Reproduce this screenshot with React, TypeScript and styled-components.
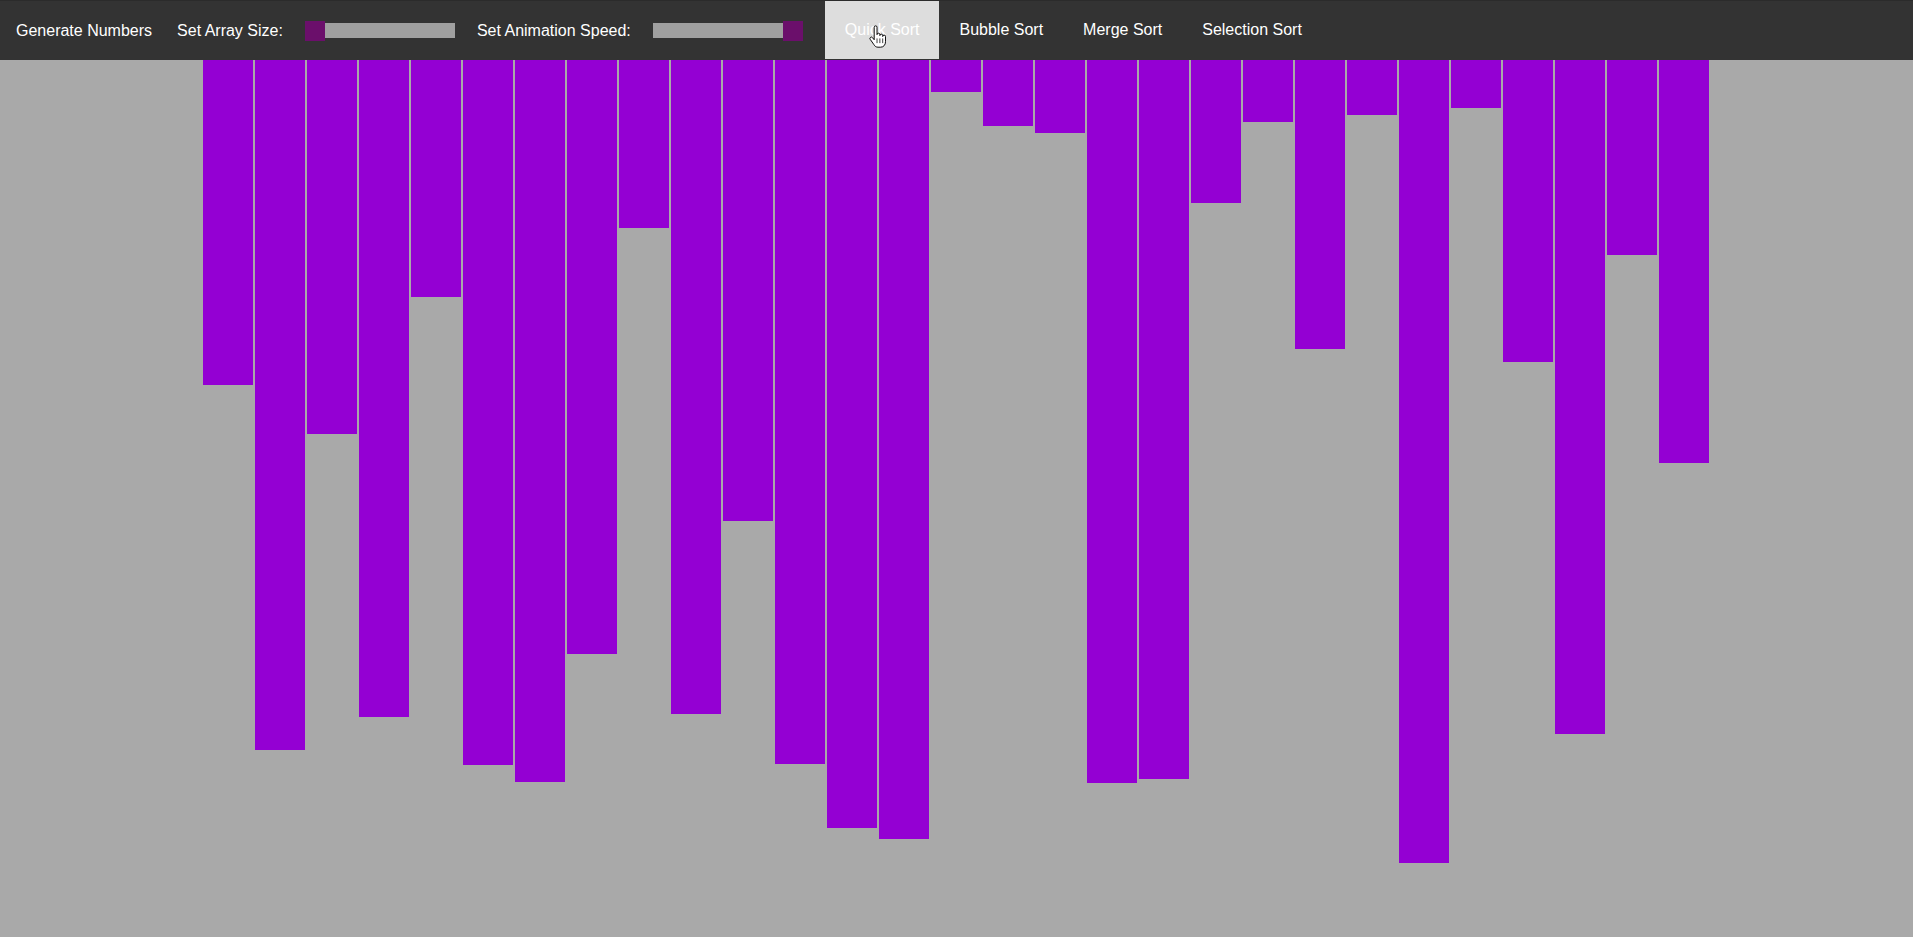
import React from "react";
import styled, { createGlobalStyle } from "styled-components";

const GlobalStyle = createGlobalStyle`
  html, body {
    margin: 0;
    padding: 0;
    background: #a9a9a9;
    font-family: "Liberation Sans", Arial, sans-serif;
  }
  #root {
    min-height: 100vh;
  }
`;

const Page = styled.div`
  position: relative;
  min-height: 100vh;
  background: #a9a9a9;
`;

const Nav = styled.nav`
  display: flex;
  align-items: center;
  height: 60px;
  box-sizing: border-box;
  border-top: 1px solid #2b2b2b;
  background: #333333;
  padding-left: 16px;
  gap: 22px;
  color: #ffffff;
  font-size: 16px;
`;

const NavText = styled.span<{ $extra?: number }>`
  color: #ffffff;
  font-size: 16px;
  line-height: 18px;
  white-space: nowrap;
  margin-right: ${(p) => p.$extra ?? 0}px;
  cursor: pointer;
`;

const Slider = styled.input`
  -webkit-appearance: none;
  appearance: none;
  width: 150px;
  height: 15px;
  margin: 0;
  padding: 0;
  background: #a0a0a0;
  outline: none;
  border: none;

  &::-webkit-slider-thumb {
    -webkit-appearance: none;
    appearance: none;
    width: 20px;
    height: 20px;
    background: #6b0f6b;
    border: none;
    cursor: pointer;
  }
`;

const SortGroup = styled.div`
  display: flex;
  align-items: center;
  height: 100%;
`;

const SortButton = styled.div<{ $active?: boolean }>`
  display: flex;
  align-items: center;
  height: 58px;
  padding: 0 20px;
  box-sizing: border-box;
  background: ${(p) => (p.$active ? "#dddddd" : "transparent")};
  color: #ffffff;
  font-size: 16px;
  white-space: nowrap;
  cursor: pointer;
  margin-bottom: 1px;
`;

const BarArea = styled.div`
  display: flex;
  justify-content: center;
  align-items: flex-start;
  padding-right: 1px;
`;

const Bar = styled.div`
  width: 50px;
  margin: 0 1px;
  background: #9400d3;
  flex: none;
`;

const Cursor = styled.svg`
  position: absolute;
  left: 869px;
  top: 25px;
  width: 17px;
  height: 24px;
  pointer-events: none;
`;

const heights = [
  325, 690, 374, 657, 237, 705, 722, 594, 168, 654, 461, 704, 768, 779, 32,
  66, 73, 723, 719, 143, 62, 289, 55, 803, 48, 302, 674, 195, 403,
];

export default function App() {
  return (
    <Page>
      <GlobalStyle />
      <Nav>
        <NavText $extra={3}>Generate Numbers</NavText>
        <NavText>Set Array Size:</NavText>
        <Slider type="range" min={10} max={100} defaultValue={10} />
        <NavText>Set Animation Speed:</NavText>
        <Slider type="range" min={1} max={100} defaultValue={100} />
        <SortGroup>
          <SortButton $active>Quick Sort</SortButton>
          <SortButton>Bubble Sort</SortButton>
          <SortButton>Merge Sort</SortButton>
          <SortButton>Selection Sort</SortButton>
        </SortGroup>
      </Nav>
      <BarArea>
        {heights.map((h, i) => (
          <Bar key={i} style={{ height: h }} />
        ))}
      </BarArea>
      <Cursor viewBox="0 0 18 25">
        <path
          d="M5.5 2.2a1.5 1.5 0 0 1 3 0V10a1.5 1.5 0 0 1 3 0v1a1.5 1.5 0 0 1 3 0v1a1.5 1.5 0 0 1 3 0v5.5c0 3.2-2 5.8-5.2 5.8H9.5c-2 0-3.2-1-4.2-2.6L1.3 15a1.5 1.5 0 0 1 2.4-1.8l1.8 2.2Z"
          fill="#ffffff"
          stroke="#000000"
          strokeWidth="1"
          strokeLinejoin="round"
        />
        <path d="M8.5 14v5M11.5 14v5M14.5 14v5" stroke="#000000" strokeWidth="0.8" />
      </Cursor>
    </Page>
  );
}
